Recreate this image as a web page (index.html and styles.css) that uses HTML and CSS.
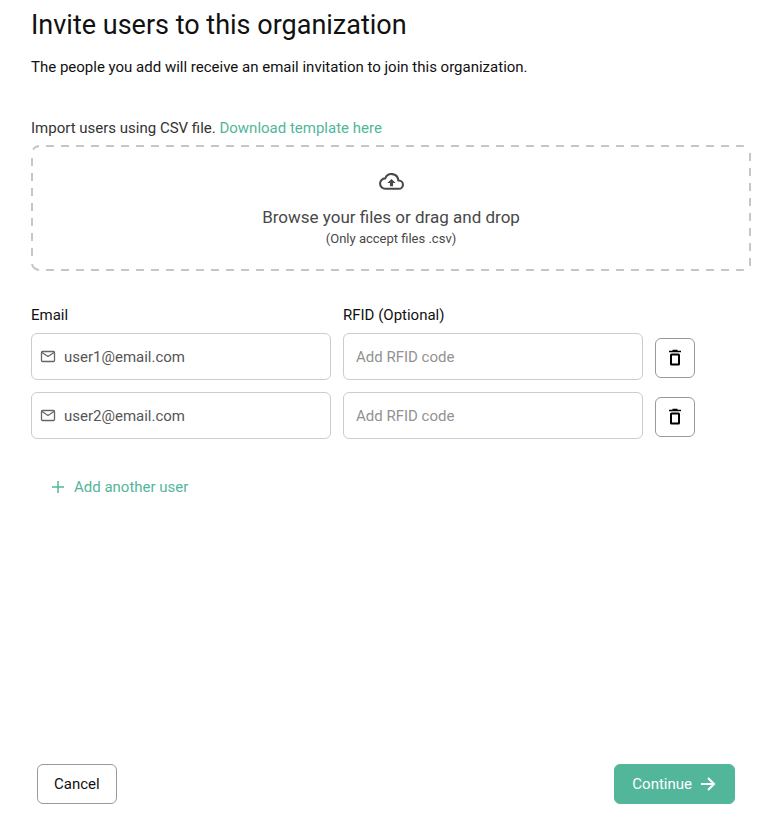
FILE: index.html
```html
<!DOCTYPE html>
<html lang="en">
<head>
<meta charset="utf-8">
<meta name="viewport" content="width=device-width, initial-scale=1">
<title>Invite users</title>
<link rel="stylesheet" href="styles.css">
</head>
<body>
<svg class="sprite" aria-hidden="true">
  <symbol id="mail" viewBox="0 0 16 14"><rect x="1.5" y="1.5" width="13" height="10" rx="1" fill="none" stroke="currentColor" stroke-width="1.3"/><path d="M2 2.5l6 4 6-4" fill="none" stroke="currentColor" stroke-width="1.3"/></symbol>
  <symbol id="trash" viewBox="0 0 14 18"><path d="M1 2.500h12M4.500 1.500h5" fill="none" stroke="currentColor" stroke-width="1.600"/><rect x="3" y="5.500" width="8" height="10" rx="0.500" fill="none" stroke="currentColor" stroke-width="2"/></symbol>
</svg>
<form class="page">
  <main class="content">
    <h1 class="title">Invite users to this organization</h1>
    <p class="intro">The people you add will receive an email invitation to join this organization.</p>
    <p class="import">Import users using CSV file. <a class="link" href="#">Download template here</a></p>
    <button class="dropzone" type="button">
      <svg class="outline" aria-hidden="true">
        <line class="dash" x1="15" y1="0" x2="99%" y2="0"/>
        <line class="dash" x1="100%" y1="8" x2="100%" y2="98%"/>
        <line class="dash" x1="15" y1="100%" x2="99%" y2="100%"/>
        <line class="dash" x1="0" y1="13" x2="0" y2="90%"/>
        <path class="corner" d="M2 4.500Q4 1.500 8 1"/>
        <svg y="100%" overflow="visible"><path class="corner" d="M1 -7Q2 -2 8 -1"/></svg>
      </svg>
      <svg class="cloud" viewBox="0 0 24 24" aria-hidden="true"><path fill="none" stroke="currentColor" stroke-width="2" stroke-linejoin="round" d="M6 19H19A4 4 0 0 0 19 11H18.500V10.500A6.500 6.500 0 0 0 6 9A5 5 0 0 0 6 19Z"/><path fill="currentColor" d="M8 13.500h2.500v3h3v-3H16L12 9.500z"/></svg>
      <span class="drop-title">Browse your files or drag and drop</span>
      <span class="drop-note">(Only accept files .csv)</span>
    </button>
    <div class="users">
      <label class="label" for="email1">Email</label>
      <label class="label label-rfid" for="rfid1">RFID (Optional)</label>
      <div class="field"><svg class="mail" aria-hidden="true"><use href="#mail"/></svg><input class="input" id="email1" type="email" value="user1@email.com"></div>
      <div class="field"><input class="input" id="rfid1" type="text" placeholder="Add RFID code"></div>
      <button class="delete" type="button" aria-label="Remove user 1"><svg class="trash" aria-hidden="true"><use href="#trash"/></svg></button>
      <div class="field"><svg class="mail" aria-hidden="true"><use href="#mail"/></svg><input class="input" type="email" aria-label="Email" value="user2@email.com"></div>
      <div class="field"><input class="input" type="text" aria-label="RFID" placeholder="Add RFID code"></div>
      <button class="delete" type="button" aria-label="Remove user 2"><svg class="trash" aria-hidden="true"><use href="#trash"/></svg></button>
    </div>
    <button class="add" type="button"><svg class="plus" viewBox="0 0 14 14" aria-hidden="true"><path d="M7 1v12M1 7h12"/></svg>Add another user</button>
  </main>
  <footer class="actions">
    <button class="button" type="button">Cancel</button>
    <button class="button primary" type="submit">Continue<svg class="arrow" viewBox="0 0 16 16" aria-hidden="true"><path d="M1 8h13M8 2l6 6-6 6"/></svg></button>
  </footer>
</form>
</body>
</html>
```
FILE: styles.css
```css
* { box-sizing: border-box; }
body { margin: 0; background: #fff; color: #111; font: 15px/20px Roboto, "Liberation Sans", sans-serif; }
button, input { font: inherit; color: inherit; }
button { cursor: pointer; }
.sprite { display: none; }
.page { min-height: 100vh; display: flex; flex-direction: column; justify-content: space-between; padding: 8px 17px 19px 31px; }
.title { margin: 0; font-size: 27px; line-height: 34px; font-weight: 400; }
.intro { margin: 15px 0 41px; }
.import { margin: 0 0 7px; color: #333; }
.link { color: #52b69a; text-decoration: none; }
.dropzone { position: relative; width: 100%; display: flex; flex-direction: column; align-items: center; padding: 24px 16px 22px; border: 0; background: none; color: #484848; }
.outline { position: absolute; inset: 0; width: 100%; height: 100%; }
.dash { stroke: #c6c6c6; stroke-width: 4; stroke-dasharray: 8 7; }
.corner { fill: none; stroke: #c6c6c6; stroke-width: 2; }
.cloud { width: 25px; height: 25px; }
.drop-title { margin-top: 11px; font-size: 17px; line-height: 24px; }
.drop-note { font-size: 13px; line-height: 20px; }
.users { display: grid; grid-template-columns: minmax(0, 300px) minmax(0, 300px) 40px; gap: 12px; align-items: center; margin-top: 34px; }
.label { margin-bottom: -4px; }
.label-rfid { grid-column: 2 / 4; }
.field { display: flex; align-items: center; gap: 8px; height: 47px; padding: 0 12px 0 8px; border: 1px solid #ccc; border-radius: 6px; }
.mail { width: 16px; height: 14px; flex: none; color: #666; }
.input { width: 100%; min-width: 0; padding: 0; border: 0; outline: 0; background: none; color: #555; }
.field .input:only-child { padding-left: 4px; }
.input::placeholder { color: #929292; opacity: 1; }
.delete { width: 40px; height: 40px; display: grid; place-items: center; margin-top: 2px; padding: 0; border: 1px solid #999; border-radius: 6px; background: #fff; color: #000; }
.trash { width: 14px; height: 18px; }
.add { display: flex; align-items: center; gap: 9px; margin: 38px 0 0 20px; padding: 0; border: 0; background: none; color: #52b69a; }
.plus { width: 14px; height: 14px; fill: none; stroke: currentColor; stroke-width: 1.5; }
.actions { display: flex; justify-content: space-between; padding: 0 16px 0 6px; }
.button { height: 40px; display: flex; align-items: center; gap: 8px; padding: 0 16px; border: 1px solid #999; border-radius: 6px; background: #fff; }
.primary { border-color: #52b69a; background: #52b69a; color: #fff; padding: 0 18px 0 17px; }
.arrow { width: 16px; height: 16px; fill: none; stroke: currentColor; stroke-width: 2; }
```
